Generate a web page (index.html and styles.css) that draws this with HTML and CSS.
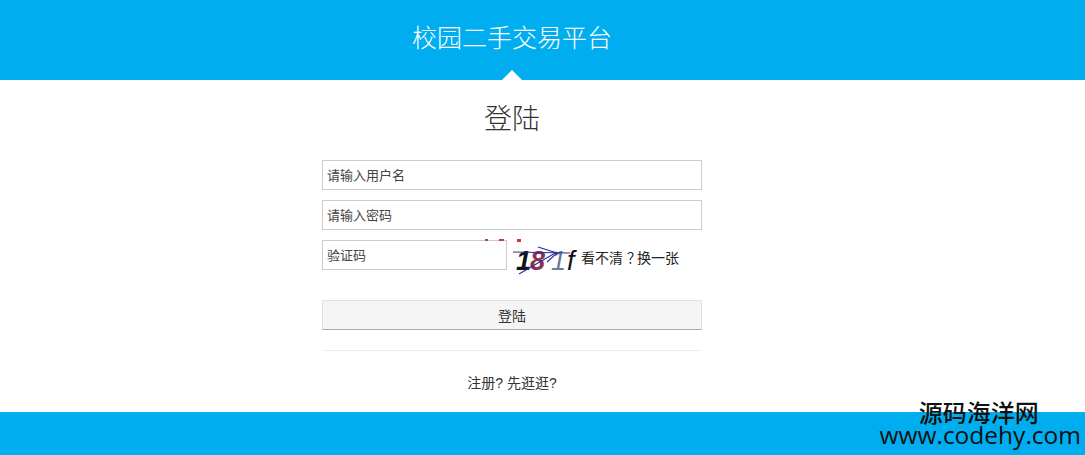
FILE: index.html
```html
<!DOCTYPE html>
<html lang="zh-CN">
<head>
<meta charset="utf-8">
<title>校园二手交易平台</title>
<link rel="stylesheet" href="styles.css">
</head>
<body>
<header class="top"><span class="brand">校园二手交易平台</span><i class="notch"></i></header>
<main class="main">
  <h1 class="title">登陆</h1>
  <form class="form">
    <input class="field" type="text" placeholder="请输入用户名">
    <input class="field" type="text" placeholder="请输入密码">
    <div class="captcha">
      <input class="field code" type="text" placeholder="验证码">
      <svg class="cap-img" width="100" height="40" viewBox="0 0 100 40" aria-label="验证码图片">
        <g fill="#c9354f"><rect x="1" y="0" width="3" height="2"/><rect x="15" y="0" width="5" height="2"/><rect x="33" y="0" width="4" height="3"/></g>
        <text x="32" y="31" class="d d1">1</text>
        <text x="46" y="31" class="d d2">8</text>
        <text x="67" y="31" class="d d3">1</text>
        <text x="83" y="31" class="d d4">f</text>
        <g fill="none" stroke="#2a2a9a" stroke-width="1.1"><path d="M29 13 L86 14"/><path d="M35 35 L73 13"/><path d="M54 8 L73 14 L63 23"/></g>
      </svg>
      <a class="refresh">看不清<span class="fw">？</span>换一张</a>
    </div>
    <button class="btn" type="button">登陆</button>
  </form>
  <hr class="rule">
  <p class="links">注册? 先逛逛?</p>
</main>
<footer class="bottom"></footer>
<div class="mark"><div class="mark-cn">源码海洋网</div><div class="mark-en">www.codehy.com</div></div>
</body>
</html>
```
FILE: styles.css
```css
* { box-sizing: border-box; }
html, body { margin: 0; padding: 0; }
body {
  height: 455px;
  overflow: hidden;
  background: #fff;
  color: #333;
  font-family: "Liberation Sans", "Noto Sans CJK SC", sans-serif;
  font-size: 14px;
  display: flex;
  flex-direction: column;
  position: relative;
}
.top {
  height: 80px;
  flex: none;
  background: #00aeef;
  display: flex;
  align-items: center;
  justify-content: center;
  position: relative;
  padding: 0 61px 4px 0;
}
.brand { color: #fff; font-size: 25px; line-height: 1; font-weight: 300; }
.notch {
  position: absolute;
  left: 502px;
  bottom: 0;
  width: 0;
  height: 0;
  border-left: 10px solid transparent;
  border-right: 10px solid transparent;
  border-bottom: 10px solid #fff;
}
.main {
  flex: 1;
  width: 380px;
  margin: 0 auto 0 322px;
  display: flex;
  flex-direction: column;
}
.title {
  margin: 22px 0 0;
  height: 58px;
  line-height: 36px;
  text-align: center;
  font-size: 28px;
  font-weight: 300;
  color: #333;
}
.form { display: flex; flex-direction: column; gap: 10px; }
.field {
  width: 380px;
  height: 30px;
  padding: 0 4px;
  border: 1px solid #ccc;
  border-radius: 0;
  font: inherit;
  font-size: 13px;
  color: #333;
  outline: none;
  background: #fff;
}
.field::placeholder { color: #444; opacity: 1; }
.captcha { height: 30px; display: flex; align-items: flex-start; position: relative; }
.code { width: 185px; flex: none; }
.cap-img { position: absolute; left: 162px; top: -1px; }
.d { font-family: "Liberation Sans", sans-serif; font-size: 27px; font-style: italic; }
.d1 { fill: #111; font-weight: 700; }
.d2 { fill: #8a3350; font-weight: 700; }
.d3 { fill: #6d7a9c; font-weight: 400; }
.d4 { fill: #111; font-weight: 400; }
.refresh {
  margin-left: 74px;
  line-height: 37px;
  color: #222;
  white-space: nowrap;
  font-size: 14px;
}
.fw { display: inline-block; width: 14px; padding-left: 4px; }
.btn {
  margin-top: 20px;
  height: 30px;
  width: 380px;
  border: 1px solid #e0e0e0;
  border-bottom: 1px solid #aaa;
  background: #f5f5f5;
  color: #333;
  font: inherit;
  font-size: 14px;
  padding: 0;
}
.rule { width: 100%; height: 1px; border: 0; background: #eee; margin: 20px 0 0; }
.links { margin: 23px 0 0; text-align: center; line-height: 18px; color: #333; font-size: 14px; }
.bottom { height: 43px; flex: none; background: #00aeef; }
.mark {
  position: absolute;
  right: 4px;
  top: 402px;
  text-align: center;
  color: #111;
}
.mark-cn { font-size: 24px; height: 24px; line-height: 24px; padding-right: 3px; font-weight: 500; }
.mark-en { font-size: 24.5px; height: 20px; line-height: 18px; font-family: "Open Sans", "Liberation Sans", sans-serif; }
```
